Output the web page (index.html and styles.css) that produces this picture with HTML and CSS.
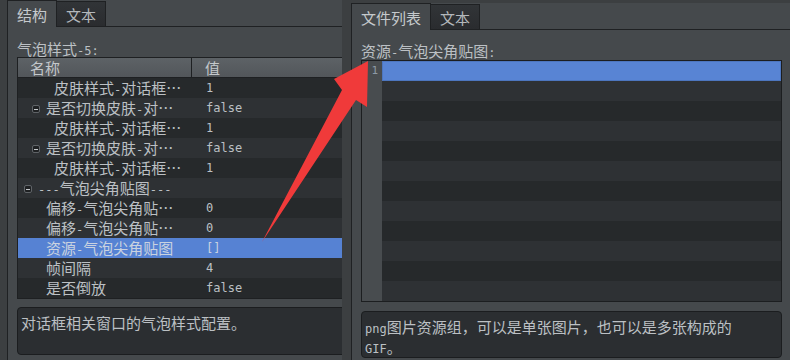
FILE: index.html
```html
<!DOCTYPE html>
<html lang="zh-CN">
<head>
    <meta charset="UTF-8">
    <meta name="viewport" content="width=device-width, initial-scale=1.0">
    <title>气泡样式</title>
    <link rel="stylesheet" href="styles.css">
</head>
<body>
    <div class="app">
        <div class="panel left">
            <div class="tabs">
                <div class="tab active">结构</div>
                <div class="tab">文本</div>
                <div class="tab-fill"></div>
            </div>
            <div class="content">
                <div class="caption">气泡样式<span class="en">-5:</span></div>
                <div class="tree">
                    <div class="tree-head">
                        <div class="head-name">名称</div>
                        <div class="head-val">值</div>
                    </div>
                    <div class="row">
                        <div class="name in-3"><span>皮肤样式<span class="en">-</span>对话框…</span></div>
                        <div class="val">1</div>
                    </div>
                    <div class="row">
                        <div class="name in-2"><span class="tog"></span><span>是否切换皮肤<span class="en">-</span>对…</span></div>
                        <div class="val">false</div>
                    </div>
                    <div class="row">
                        <div class="name in-3"><span>皮肤样式<span class="en">-</span>对话框…</span></div>
                        <div class="val">1</div>
                    </div>
                    <div class="row">
                        <div class="name in-2"><span class="tog"></span><span>是否切换皮肤<span class="en">-</span>对…</span></div>
                        <div class="val">false</div>
                    </div>
                    <div class="row">
                        <div class="name in-3"><span>皮肤样式<span class="en">-</span>对话框…</span></div>
                        <div class="val">1</div>
                    </div>
                    <div class="row">
                        <div class="name in-1"><span class="tog"></span><span><span class="en">---</span>气泡尖角贴图<span class="en">---</span></span></div>
                        <div class="val"></div>
                    </div>
                    <div class="row">
                        <div class="name in-leaf"><span>偏移<span class="en">-</span>气泡尖角贴…</span></div>
                        <div class="val">0</div>
                    </div>
                    <div class="row">
                        <div class="name in-leaf"><span>偏移<span class="en">-</span>气泡尖角贴…</span></div>
                        <div class="val">0</div>
                    </div>
                    <div class="row selected">
                        <div class="name in-leaf"><span>资源<span class="en">-</span>气泡尖角贴图</span></div>
                        <div class="val">[]</div>
                    </div>
                    <div class="row">
                        <div class="name in-leaf"><span>帧间隔</span></div>
                        <div class="val">4</div>
                    </div>
                    <div class="row">
                        <div class="name in-leaf"><span>是否倒放</span></div>
                        <div class="val">false</div>
                    </div>
                </div>
                <div class="desc">对话框相关窗口的气泡样式配置。</div>
            </div>
        </div>

        <div class="splitter"></div>

        <div class="panel right">
            <div class="tabs">
                <div class="tab active">文件列表</div>
                <div class="tab">文本</div>
                <div class="tab-fill"></div>
            </div>
            <div class="content">
                <div class="caption">资源<span class="en">-</span>气泡尖角贴图<span class="en">:</span></div>
                <div class="editor">
                    <div class="gutter">1</div>
                    <div class="lines">
                        <div class="line current"></div>
                        <div class="line"></div>
                        <div class="line"></div>
                        <div class="line"></div>
                        <div class="line"></div>
                        <div class="line"></div>
                        <div class="line"></div>
                        <div class="line"></div>
                        <div class="line"></div>
                        <div class="line"></div>
                        <div class="line"></div>
                        <div class="line"></div>
                    </div>
                </div>
                <div class="desc"><span class="en">png</span>图片资源组，可以是单张图片，也可以是多张构成的<br><span class="en">GIF</span>。</div>
            </div>
        </div>
    </div>

    <!-- annotation arrow drawn over the screenshot -->
    <svg class="arrow" width="790" height="360" viewBox="0 0 790 360">
        <polygon points="262,242 342,90 334,79 368,61 367,107 356,100" fill="#f03a3a"/>
    </svg>
</body>
</html>
```

FILE: styles.css
```css
html, body {
    margin: 0;
    padding: 0;
}
body {
    width: 790px;
    height: 360px;
    overflow: hidden;
    position: relative;
    background: #3c3f41;
    color: #bcc0c4;
    font-family: "Noto Sans CJK SC", "DejaVu Sans", sans-serif;
    font-size: 15px;
}
.en {
    font-family: "DejaVu Sans Mono", monospace;
    font-size: 12px;
}
.app {
    display: flex;
    height: 360px;
}
.panel {
    background: #45494c;
    border-left: 1px solid #1f2123;
    overflow: hidden;
    display: flex;
    flex-direction: column;
}
.left {
    margin-left: 7px;
    width: 334px;
}
.splitter {
    width: 9px;
    flex: none;
}
.right {
    margin-top: 3px;
    flex: 1;
}

/* tabs */
.tabs {
    display: flex;
    height: 27px;
    flex: none;
}
.tab {
    box-sizing: border-box;
    padding: 0 9px;
    line-height: 25px;
    border: 1px solid #1f2123;
    margin-left: -1px;
    margin-top: 1px;
    background: linear-gradient(#313437, #2a2c2f);
    color: #b4b8bc;
}
.tab.active {
    margin-top: 0;
    margin-left: 0;
    border-left: none;
    border-bottom: none;
    background: #45494c;
    color: #c6cacd;
    line-height: 27px;
}
.tab-fill {
    flex: 1;
    border-bottom: 1px solid #1f2123;
}

.content {
    padding: 14px 0 0 9px;
    flex: 1;
}
.right .content {
    padding-top: 13px;
}
.caption {
    line-height: 16px;
    height: 16px;
    white-space: nowrap;
}
.right .caption {
    margin-bottom: 1px;
}

/* property tree */
.tree {
    width: 360px;
    border: 1px solid #1e2022;
    background: #26292b;
}
.tree-head {
    display: grid;
    grid-template-columns: 174px 1fr;
    height: 19px;
    line-height: 19px;
    background: linear-gradient(#5d6266, #52565a);
    border-bottom: 1px solid #1e2022;
    color: #c4c8cb;
}
.head-name {
    padding-left: 12px;
    border-right: 1px solid #1e2022;
}
.head-val {
    padding-left: 13px;
}
.row {
    display: grid;
    grid-template-columns: 174px 1fr;
    height: 20px;
    line-height: 20px;
    white-space: nowrap;
}
.row:nth-child(odd) {
    background: #2e3134;
}
.row.selected {
    background: #5682d3;
    color: #c9d2e0;
}
.name {
    display: flex;
    align-items: center;
    gap: 6px;
}
.in-1 {
    padding-left: 6px;
}
.in-2 {
    padding-left: 14px;
}
.in-3 {
    padding-left: 36px;
}
.in-leaf {
    padding-left: 28px;
}
.tog {
    display: inline-flex;
    align-items: center;
    justify-content: center;
    box-sizing: border-box;
    width: 8px;
    height: 8px;
    border: 1px solid #5f6367;
    border-radius: 2px;
    background: #1f2123;
    flex: none;
}
.tog::after {
    content: "";
    width: 4px;
    height: 1px;
    background: #c8cbce;
}
.val {
    padding-left: 14px;
    font-family: "DejaVu Sans Mono", monospace;
    font-size: 12px;
}

/* file list editor */
.editor {
    display: flex;
    width: 419px;
    border: 1px solid #1c1e20;
}
.gutter {
    width: 20px;
    box-sizing: border-box;
    background: #484c4f;
    text-align: right;
    padding-right: 4px;
    line-height: 20px;
    color: #8d9aa6;
    font-family: "DejaVu Sans Mono", monospace;
    font-size: 11px;
}
.lines {
    flex: 1;
}
.line {
    height: 20px;
    background: #26292b;
}
.line:nth-child(even) {
    background: #2e3134;
}
.line.current {
    background: #5884d4;
    box-shadow: inset 0 0 0 1px #4d76bf;
}

/* description boxes */
.desc {
    margin-top: 8px;
    width: 360px;
    box-sizing: border-box;
    height: 48px;
    padding: 6px 3px 2px;
    line-height: 18px;
    background: #2b2e31;
    border: 1px solid #1b1d1f;
    border-radius: 4px;
}
.right .desc {
    margin-top: 9px;
    width: 421px;
    height: 47px;
}

.arrow {
    position: absolute;
    left: 0;
    top: 0;
    pointer-events: none;
}
```
